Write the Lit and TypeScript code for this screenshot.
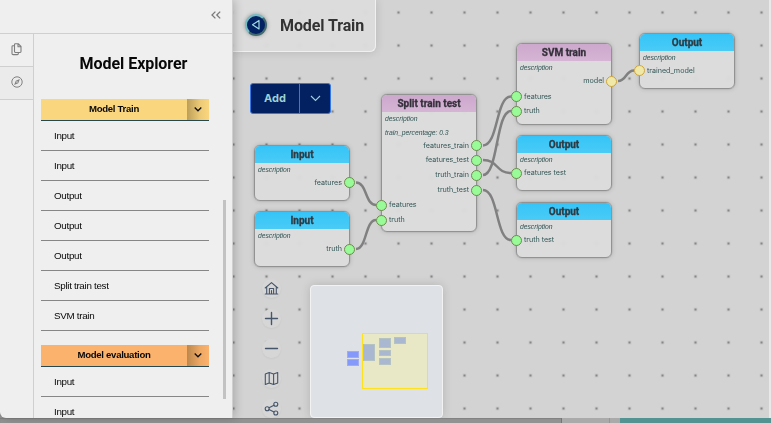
import { LitElement, html, svg, css } from "lit";
import { customElement, property } from "lit/decorators.js";
import { styleMap } from "lit/directives/style-map.js";

type Port = { label: string; y: number; side: "in" | "out"; gold?: boolean };
type FlowNode = { title: string; kind: "io" | "op"; x: number; y: number; h: number; ports: Port[]; extra?: string };

const NODES: FlowNode[] = [
  { title: "Input", kind: "io", x: 254, y: 145, h: 56, ports: [{ label: "features", y: 182.5, side: "out" }] },
  { title: "Input", kind: "io", x: 254, y: 211, h: 56, ports: [{ label: "truth", y: 249, side: "out" }] },
  {
    title: "Split train test", kind: "op", x: 381, y: 94, h: 138, extra: "train_percentage: 0.3",
    ports: [
      { label: "features_train", y: 145.5, side: "out" },
      { label: "features_test", y: 160, side: "out" },
      { label: "truth_train", y: 175, side: "out" },
      { label: "truth_test", y: 190, side: "out" },
      { label: "features", y: 205, side: "in" },
      { label: "truth", y: 220, side: "in" },
    ],
  },
  {
    title: "SVM train", kind: "op", x: 516, y: 43, h: 82,
    ports: [
      { label: "model", y: 81, side: "out", gold: true },
      { label: "features", y: 96.5, side: "in" },
      { label: "truth", y: 111, side: "in" },
    ],
  },
  { title: "Output", kind: "io", x: 639, y: 33, h: 56, ports: [{ label: "trained_model", y: 70.5, side: "in", gold: true }] },
  { title: "Output", kind: "io", x: 516, y: 135, h: 56, ports: [{ label: "features test", y: 173, side: "in" }] },
  { title: "Output", kind: "io", x: 516, y: 202, h: 56, ports: [{ label: "truth test", y: 240, side: "in" }] },
];

const EDGES: [number, number, number, number][] = [
  [356, 182.5, 376, 205],
  [356, 249, 376, 220],
  [483, 145.5, 511, 96.5],
  [483, 160, 511, 173],
  [483, 175, 511, 111],
  [483, 190, 511, 240],
  [618, 81, 634, 70.5],
];

@customElement("flow-node")
export class FlowNodeElement extends LitElement {
  @property({ attribute: false }) node!: FlowNode;
  static styles = css`
    :host { display: block; position: absolute; width: 96px; }
    .card { box-sizing: border-box; width: 96px; height: 100%; border: 1px solid #929292; border-radius: 6px; background: rgba(222,222,222,.82); backdrop-filter: blur(2px); box-shadow: 0 0 5px rgba(0,0,0,.16), 0 0 1px rgba(0,0,0,.4); overflow: hidden; }
    .head { height: 17px; text-align: center; font: 700 10px/17px Roboto, sans-serif; color: #2d3b44; }
    .head span, .desc, .label { filter: blur(.35px); }
    .head span { display: block; -webkit-text-stroke: .3px currentColor; }
    .io { background: linear-gradient(#35c4f8, #4acbf6); }
    .op { background: linear-gradient(#cda9cd, #d5b4d5); color: #35313b; }
    .desc { font: italic 6.8px/14px "Liberation Sans", sans-serif; padding-left: 3px; color: #2f5252; letter-spacing: -.03px; white-space: nowrap; }
    .port { position: absolute; height: 12px; display: flex; align-items: center; gap: 2px; font: 7.2px/12px Inter, sans-serif; color: #365858; white-space: nowrap; letter-spacing: -.04px; }
    .in { left: -5px; }
    .out { right: -5px; flex-direction: row-reverse; }
    .dot { box-sizing: border-box; width: 11px; height: 11px; border-radius: 50%; background: #98fb98; border: 1px solid #6d8a4c; }
    .gold { background: #f0e8a6; border-color: #cda43b; }
  `;
  render() {
    const n = this.node;
    return html`<div class="card">
        <div class="head ${n.kind}"><span>${n.title}</span></div>
        <div class="desc">description</div>
        ${n.extra ? html`<div class="desc">${n.extra}</div>` : null}
      </div>
      ${n.ports.map((p) => html`<div class="port ${p.side}" style=${styleMap({ top: `${p.y - n.y - 6}px` })}>
        <span class="dot ${p.gold ? "gold" : ""}"></span><span class="label">${p.label}</span></div>`)}`;
  }
}

@customElement("explorer-group")
export class ExplorerGroup extends LitElement {
  @property() heading = "";
  @property() tone = "yellow";
  @property({ attribute: false }) items: string[] = [];
  static styles = css`
    :host { display: block; width: 168px; font: 9.8px/30px "Liberation Sans", Arial, sans-serif; letter-spacing: -.3px; color: #080808; }
    .bar { display: flex; height: 21px; border-bottom: 1px solid #26484e; font-weight: 700; line-height: 20px; font-size: 9.6px; letter-spacing: -.3px; }
    .name { flex: 1; text-align: center; }
    .yellow { background: #fad67f; }
    .orange { background: #fbb26c; }
    .toggle { width: 22px; display: flex; align-items: center; justify-content: center; background: linear-gradient(90deg, rgba(80,60,20,.36), rgba(80,60,20,.08) 60%, transparent); }
    .item { height: 29px; padding-left: 13px; border-bottom: 1px solid #868686; }
  `;
  render() {
    return html`<div class="bar ${this.tone}"><span class="name">${this.heading}</span><span class="toggle">
        <svg width="8" height="6" viewBox="0 0 8 6" fill="none" stroke="#111" stroke-width="1.3"><path d="M.7 .5 4 3.8 7.3 .5"/></svg></span></div>
      ${this.items.map((t) => html`<div class="item">${t}</div>`)}`;
  }
}

@customElement("app-root")
export class AppRoot extends LitElement {
  static styles = css`
    :host { display: flex; flex-direction: column; position: relative; width: 771px; height: 423px; overflow: hidden; background: #929292; }
    .main { display: flex; height: 418px; flex: none; }
    .side { box-sizing: border-box; width: 233px; height: 418px; background: #efefef; border-right: 1px solid #cfcfcf; border-radius: 0 0 0 6px; overflow: hidden; box-shadow: 2px 0 10px rgba(0,0,0,.2); z-index: 2; display: flex; flex-direction: column; }
    .top { flex: none; border-bottom: 1px solid #cfcfcf; box-sizing: border-box; height: 34px; display: flex; justify-content: flex-end; align-items: center; padding: 0 11px 3px 0; }
    .body { display: flex; flex: 1; min-height: 0; }
    .tabs { width: 33px; border-right: 1px solid #cfcfcf; }
    .tab { border-bottom: 1px solid #cfcfcf; display: flex; align-items: center; justify-content: center; padding-bottom: 1px; box-sizing: border-box; height: 33px; }
    .tab.on { background: #ebebeb; padding-bottom: 3px; }
    .panel { width: 168px; padding-left: 7px; }
    h1 { margin: 0; height: 65px; padding-top: 18px; box-sizing: border-box; text-align: center; font: 700 16px/24px Roboto, sans-serif; color: #080808; padding-left: 17px; white-space: nowrap; letter-spacing: -.05px; }
    .second { margin-top: 14px; }
    .scroll { width: 3px; height: 199px; margin: 166px 0 0 14px; background: #c2c2c2; }
    .canvas { position: relative; flex: 1; background: #d3d3d3; overflow: hidden; border-right: 2px solid #e9e9e9; }
    .layer { position: absolute; top: 0; left: -233px; width: 771px; height: 418px; }
    .title { position: absolute; left: 0; top: 0; width: 143px; height: 52px; box-sizing: border-box; border: solid #f0f0f0; border-width: 0 1px 1px 0; border-radius: 0 0 6px 0; background: rgba(222,222,222,.82); backdrop-filter: blur(2px); box-shadow: 0 0 10px rgba(0,0,0,.14); display: flex; align-items: center; gap: 13px; padding-left: 12px; font: 700 16px/20px Roboto, sans-serif; color: #333; letter-spacing: -.1px; white-space: nowrap; }
    .back { box-sizing: border-box; width: 22px; height: 22px; border-radius: 50%; background: #032263; border: 2px outset #75bcc3; display: flex; align-items: center; justify-content: center; box-shadow: 0 0 4px rgba(0,0,0,.35); flex: none; margin-top: -2px; }
    .add { position: absolute; left: 17px; top: 83px; width: 81px; height: 31px; box-sizing: border-box; border: 1px solid #3478e8; border-radius: 3px; background: #032061; display: flex; color: #9ed1d4; font: 700 11px/29px Inter, sans-serif; }
    .add span { width: 48px; text-align: center; border-right: 1px solid #3478e8; }
    .add i { flex: 1; display: flex; align-items: center; justify-content: center; }
    .tools { position: absolute; left: 29px; top: 279px; display: flex; flex-direction: column; gap: 11px; }
    .tool { width: 19px; height: 19px; border-radius: 50%; background: #d6d6d6; box-shadow: 0 1px 2px rgba(0,0,0,.05); display: flex; align-items: center; justify-content: center; }
    .map { position: absolute; left: 77px; top: 285px; width: 133px; height: 133px; box-sizing: border-box; border: 1px solid #f2f2f2; border-radius: 4px; background: #dee2e7; box-shadow: 0 0 10px rgba(0,0,0,.15); }
    .map svg { display: block; }
    .foot { display: flex; flex: 1; box-shadow: inset 0 1px 1px rgba(0,0,0,.12); }
    .f1 { width: 561px; border-right: 1px solid #757575; }
    .f2 { width: 47px; background: #aaa; border-right: 1px solid #969696; }
    .f3 { width: 10px; background: #aaa; }
    .f4 { flex: 1; background: #539492; }
  `;

  private tool(body: unknown) {
    return html`<div class="tool"><svg width="15" height="15" viewBox="0 0 15 15" fill="none" stroke="#46556a" stroke-width="1.1" stroke-linejoin="round" stroke-linecap="round">${body}</svg></div>`;
  }

  render() {
    const block = (x: number, y: number, w: number, h: number, sel = false) =>
      svg`<rect x=${x} y=${y} width=${w} height=${h} fill=${sel ? "#8499fa" : "#a9b7d1"} stroke=${sel ? "#a0acee" : "#b5c2c3"} stroke-width="1"/>`;
    return html`
      <div class="main">
        <div class="side">
          <div class="top"><svg width="10" height="8" viewBox="0 0 10 8" fill="none" stroke="#7a7a7a" stroke-width="1.3"><path d="M4.4 .6 1 4l3.4 3.4M9.2 .6 5.8 4l3.4 3.4"/></svg></div>
          <div class="body">
            <div class="tabs">
              <div class="tab"><svg width="11" height="13" viewBox="0 0 11 13" fill="none" stroke="#7e7e7e" stroke-width="1.1" stroke-linejoin="round"><path d="M3.5 1.6Q3.5.7 4.4.7H7.2L10 3.5V8.6Q10 9.5 9.1 9.5H4.4Q3.5 9.5 3.5 8.6ZM7 .8V3.7H10M3.4 2.8H1.8Q1 2.8 1 3.7V10.5Q1 11.6 2.1 11.6H6.4Q7.3 11.6 7.3 10.7V9.6"/></svg></div>
              <div class="tab on"><svg width="12" height="12" viewBox="0 0 12 12"><circle cx="6" cy="6" r="5.2" fill="none" stroke="#808080"/><path d="M8.9 3.1 7.2 7.2 3.1 8.9 4.8 4.8Z" fill="#808080"/><circle cx="6" cy="6" r=".8" fill="#ebebeb"/></svg></div>
            </div>
            <div class="panel">
              <h1>Model Explorer</h1>
              <explorer-group heading="Model Train" .items=${["Input", "Input", "Output", "Output", "Output", "Split train test", "SVM train"]}></explorer-group>
              <explorer-group class="second" heading="Model evaluation" tone="orange" .items=${["Input", "Input"]}></explorer-group>
            </div>
            <div class="scroll"></div>
          </div>
        </div>
        <div class="canvas">
          <div class="layer">
            <svg width="771" height="418">
              <defs><pattern id="dots" x="249.5" y="-4.5" width="33" height="33" patternUnits="userSpaceOnUse">
                <rect x="15.5" y="15.5" width="3" height="3" fill="#aaa" opacity=".65"/><rect x="16" y="16" width="2" height="2" fill="#777" opacity=".75"/>
              </pattern></defs>
              <rect width="771" height="418" fill="url(#dots)"/>
              <g fill="none" stroke="#808080" stroke-width="2.5">
                ${EDGES.map(([a, b, c, d]) => {
                  const k = (c - a) * 0.55;
                  return svg`<path d="M${a} ${b}C${a + k} ${b} ${c - k} ${d} ${c} ${d}"/>`;
                })}
              </g>
            </svg>
            ${NODES.map((n) => html`<flow-node .node=${n} style=${styleMap({ left: `${n.x}px`, top: `${n.y}px`, height: `${n.h}px` })}></flow-node>`)}
          </div>
          <div class="title"><span class="back"><svg width="10" height="12" viewBox="0 0 10 12" fill="none" stroke="#a4dbe1" stroke-width="1.2" stroke-linejoin="round"><path d="M8 1.5V10L1.5 5.8Z"/></svg></span>Model Train</div>
          <div class="add"><span>Add</span><i><svg width="11" height="7" viewBox="0 0 11 7" fill="none" stroke="#9ed1d4" stroke-width="1.1"><path d="M1 1 5.5 5.5 10 1"/></svg></i></div>
          <div class="tools">
            ${this.tool(svg`<path d="M1.2 7 7.5 1.6 13.8 7M2.7 6V13H12.3V6M5.4 13V7.5H9.6V13M7.5 9.5V13M1.2 13H13.8"/>`)}
            ${this.tool(svg`<path d="M7.5 1.5V13.5M1.5 7.5H13.5" stroke-width="1.4"/>`)}
            ${this.tool(svg`<path d="M1.5 7.5H13.5" stroke-width="1.4"/>`)}
            ${this.tool(svg`<path d="M1.3 3 5.2 1.5 9.6 3 13.7 1.5V12L9.6 13.5 5.2 12 1.3 13.5ZM5.2 1.5V12M9.6 3V13.5"/>`)}
            ${this.tool(svg`<circle cx="3.2" cy="7.7" r="2"/><circle cx="11.8" cy="3.3" r="2"/><circle cx="11.8" cy="12" r="2"/><path d="M5 6.8 10 4.2M5 8.6 10 11.1"/>`)}
          </div>
          <div class="map"><svg width="131" height="131" viewBox="311 286 131 131">
            <rect x="362.5" y="333.5" width="65" height="55" fill="#e8e8c6" stroke="#ffe21c"/>
            ${block(347.5, 351.5, 11, 6, true)}${block(347.5, 359.5, 11, 6, true)}
            ${block(363.5, 344.5, 11, 16)}${block(379.5, 338.5, 11, 9)}${block(394.5, 337.5, 11, 6)}
            ${block(379.5, 350.5, 11, 5)}${block(379.5, 358.5, 11, 6)}
          </svg></div>
        </div>
      </div>
      <div class="foot"><div class="f1"></div><div class="f2"></div><div class="f3"></div><div class="f4"></div></div>`;
  }
}
